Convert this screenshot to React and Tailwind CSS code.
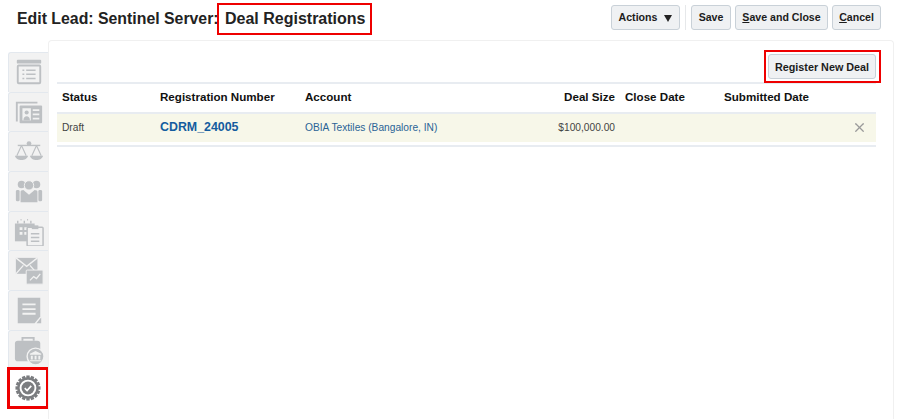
import { X } from "lucide-react";

const grey = "#bdc0c3";
const tabBg = "#f2f2f2";

function TabIcon({ children }) {
  return (
    <svg width="30" height="30" viewBox="0 0 32 32" className="block">
      {children}
    </svg>
  );
}

const icons = [
  // summary card
  <TabIcon key="summary">
    <rect x="3" y="3" width="26" height="4" rx="1" fill={grey} />
    <rect x="4" y="9" width="24" height="19" rx="1" fill={tabBg} stroke={grey} strokeWidth="2" />
    <path d="M9 14h2M13 14h10M9 18.5h2M13 18.5h10M9 23h2M13 23h10" stroke={grey} strokeWidth="1.6" />
  </TabIcon>,
  // contact card
  <TabIcon key="contact">
    <path d="M3 26V6h22" fill="none" stroke={grey} strokeWidth="2" />
    <rect x="6" y="9" width="24" height="19" rx="1" fill={grey} />
    <rect x="9" y="12" width="9" height="13" fill={tabBg} />
    <circle cx="13.5" cy="16.5" r="2.2" fill={grey} />
    <path d="M10 25c0-6 7-6 7 0z" fill={grey} />
    <path d="M20 14h7M20 18.5h7M20 23h7" stroke={tabBg} strokeWidth="2" />
  </TabIcon>,
  // scales
  <TabIcon key="scales">
    <circle cx="16" cy="7" r="2.5" fill={grey} />
    <path d="M4 9h24" stroke={grey} strokeWidth="1.5" />
    <path d="M8 9L3 20M8 9l5 11M24 9l-5 11M24 9l5 11" fill="none" stroke={grey} strokeWidth="1.2" />
    <path d="M1 20h14c-1 6-13 6-14 0zM17 20h14c-1 6-13 6-14 0z" fill={grey} />
  </TabIcon>,
  // team
  <TabIcon key="team">
    <circle cx="8" cy="9" r="4" fill={grey} />
    <circle cx="24" cy="9" r="4" fill={grey} />
    <rect x="2" y="15" width="4" height="12" rx="1.5" fill={grey} />
    <rect x="26" y="15" width="4" height="12" rx="1.5" fill={grey} />
    <circle cx="16" cy="10" r="5" fill={grey} stroke={tabBg} />
    <path d="M7 17q0-2 3-2l6 5 6-5q3 0 3 2v11H7z" fill={grey} />
  </TabIcon>,
  // calendar and clipboard
  <TabIcon key="calendar">
    <path d="M4 5v3M11 5v3M18 5v3M7 4h1M14 4h1" stroke={grey} strokeWidth="1.5" />
    <rect x="1" y="8" width="21" height="19" fill={grey} />
    <path d="M6 12h3v3H6zM11 12h3v3h-3zM6 17h3v3H6zM11 17h3v3h-3z" fill={tabBg} />
    <rect x="14" y="12" width="17" height="20" rx="1" fill={tabBg} stroke={grey} strokeWidth="1.6" />
    <rect x="19" y="10" width="7" height="4" fill={grey} />
    <path d="M18 19h9M18 23h9M18 27h9" stroke={grey} strokeWidth="1.5" />
  </TabIcon>,
  // mail with chart
  <TabIcon key="mail">
    <rect x="2" y="2" width="23" height="17" fill={grey} />
    <path d="M2 2l11.5 9L25 2M2 19l8-9M25 19l-8-9" fill="none" stroke={tabBg} strokeWidth="1.4" />
    <rect x="13" y="15" width="18" height="15" rx="1" fill={grey} stroke={tabBg} />
    <path d="M17 26l4-4 3 2 4-5" fill="none" stroke={tabBg} strokeWidth="1.4" />
  </TabIcon>,
  // note
  <TabIcon key="note">
    <path d="M4 3h24v20l-6 7H4z" fill={grey} />
    <path d="M9 10h14M9 15h14M9 20h14" stroke={tabBg} strokeWidth="2" />
    <path d="M24 30l5-6v6z" fill={grey} />
  </TabIcon>,
  // case with bank
  <TabIcon key="case">
    <path d="M9 6V3h12v3" fill="none" stroke={grey} strokeWidth="2" />
    <rect x="1" y="6" width="27" height="22" rx="3" fill={grey} />
    <circle cx="23" cy="23" r="9" fill={grey} stroke={tabBg} strokeWidth="1.5" />
    <path d="M23 17l6 3v1H17v-1zM18 22h2v4h-2zM22 22h2v4h-2zM26 22h2v4h-2zM17 27h12v1H17z" fill={tabBg} />
  </TabIcon>,
];

function ActiveIcon() {
  const teeth = Array.from({ length: 16 }, (_, i) => i * 22.5);
  return (
    <svg width="26" height="26" viewBox="0 0 28 28" className="block">
      {teeth.map((a) => (
        <rect key={a} x="12.2" y="0.5" width="3.6" height="5" fill="#7b7d80" transform={`rotate(${a} 14 14)`} />
      ))}
      <circle cx="14" cy="14" r="11.5" fill="#7b7d80" />
      <circle cx="14" cy="14" r="9" fill="#fff" />
      <circle cx="14" cy="14" r="7" fill="#7b7d80" />
      <path d="M10.5 14.2l2.5 2.5 4.5-5" fill="none" stroke="#fff" strokeWidth="1.8" />
    </svg>
  );
}

function Btn({ children, className = "" }) {
  return (
    <button className={`h-[25px] pt-[1px] rounded-[3px] border border-[#c9d1d8] bg-[#eff1f3] text-[10.6px] font-bold text-[#1c1c1c] ${className}`}>
      {children}
    </button>
  );
}

const th = "text-[11.6px] font-bold text-[#111]";
const td = "text-[10.2px] text-[#444]";

export default function App() {
  return (
    <div className="w-[897px] h-[419px] overflow-hidden bg-white font-['Liberation_Sans',Arial,sans-serif]">
      <header className="h-[40px] pl-[17px] pr-[16px] flex items-start justify-between">
        <h1 className="flex items-center pt-[3px] text-[16px] font-bold text-[#222]">
          <span className="w-[200px] text-[15.85px] whitespace-nowrap">Edit Lead: Sentinel Server:</span>
          <span className="h-[32px] w-[155px] pl-[6px] flex items-center border-2 border-[#ee0000]">Deal Registrations</span>
        </h1>
        <div className="flex items-center pt-[5px]">
          <Btn className="w-[69px] flex items-center justify-center gap-[7px]">
            Actions
            <span className="w-0 h-0 border-x-[4.5px] border-x-transparent border-t-[7px] border-t-[#222]" />
          </Btn>
          <span className="w-px h-[25px] bg-[#e6e8ea] mx-[5px]" />
          <Btn className="w-[40px]">Save</Btn>
          <Btn className="w-[93px] ml-[4px]"><span className="underline">S</span>ave and Close</Btn>
          <Btn className="w-[49px] ml-[4px]"><span className="underline">C</span>ancel</Btn>
        </div>
      </header>

      <div className="flex pl-[8px]">
        <nav className="w-[40px] pt-[12px] flex flex-col shrink-0">
          {icons.map((icon, i) => (
            <div
              key={i}
              className="h-[39.7px] flex items-center justify-center bg-[#f2f2f2] border-l border-t border-[#e3e8ee] rounded-tl-[3px]"
            >
              {icon}
            </div>
          ))}
          <div className="h-[42px] mt-[-3px] ml-[-1px] w-[42px] shrink-0 flex items-center justify-center border-[3px] border-[#ee0000] bg-white">
            <ActiveIcon />
          </div>
        </nav>

        <main className="w-[846px] h-[379px] border-l border-t border-r border-[#f0f0f0] rounded-t-[4px] pl-[8px] pr-[17px]">
          <div className="flex justify-end pt-[9px] mr-[-5px]">
            <div className="w-[117px] h-[33px] pl-[2px] border-2 border-[#ee0000] flex items-center">
              <Btn className="w-[108px] text-[10.8px]">Register New Deal</Btn>
            </div>
          </div>

          <div className="mt-[-1px] border-t-2 border-[#e8ecf1]">
            <div className="grid grid-cols-[98px_145px_235px_75px_99px_1fr] h-[28px] pb-[2px] items-center pl-[5px]">
              <span className={th}>Status</span>
              <span className={th}>Registration Number</span>
              <span className={th}>Account</span>
              <span className={`${th} text-right`}>Deal Size</span>
              <span className={`${th} pl-[10px]`}>Close Date</span>
              <span className={`${th} pl-[10px]`}>Submitted Date</span>
            </div>
            <div className="grid grid-cols-[98px_145px_235px_75px_1fr_24px] h-[30px] pb-[1px] items-center pl-[5px] bg-[#f7f7e9] border-t-2 border-[#e8ecf1]">
              <span className={td}>Draft</span>
              <span className="text-[12.4px] font-bold text-[#145c9e]">CDRM_24005</span>
              <span className="text-[10.2px] text-[#2a6396]">OBIA Textiles (Bangalore, IN)</span>
              <span className={`${td} text-right`}>$100,000.00</span>
              <span />
              <X size={15} strokeWidth={2} className="text-[#9a9a9a]" />
            </div>
            <div className="mt-[3px] border-t-2 border-[#e8ecf1]" />
          </div>
        </main>
      </div>
    </div>
  );
}
